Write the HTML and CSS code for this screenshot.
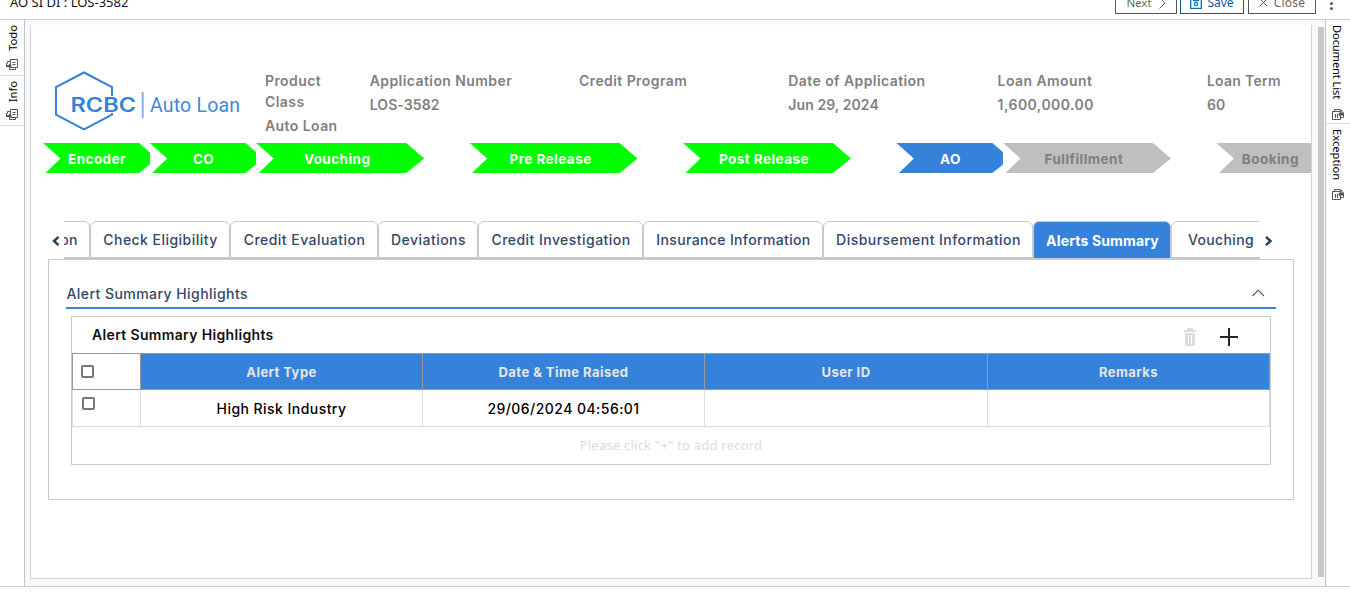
FILE: index.html
```html
<!DOCTYPE html>
<html lang="en">
<head>
<meta charset="utf-8">
<title>AO SI DI : LOS-3582</title>
<link rel="stylesheet" href="styles.css">
</head>
<body>
<svg class="defs" aria-hidden="true">
  <symbol id="doc-icon" viewBox="0 0 12 11">
    <path d="M4.500 2.500v-2h7v8h-2M4.500 2.500H1.500v2M3.500 9v1.500h6v-2M6.500 3.500h3M6.500 5.500h3M4.500 2.500v6h5" fill="none" stroke="#555" stroke-width="1"/>
    <path d="M0 4h1v2h2V4.500L6 7 3 9.500V8H0z" fill="#555"/>
  </symbol>
  <symbol id="list-icon" viewBox="0 0 12 11">
    <path d="M.5 2.500h8v8h-8zM2.500 2.500v-2h6v2M8.500 1.500h1.500v2M8.500 8.500h3v-3M3.500 5v4M5.500 5v4" fill="none" stroke="#555" stroke-width="1"/>
    <path d="M12 3.500v3H9V8L6 5.200 9 2.500v1z" fill="#555"/>
  </symbol>
</svg>
<div class="app">
  <header class="topbar">
    <h1 class="page-title">AO SI DI : LOS-3582</h1>
    <div class="actions">
      <button class="btn btn-next"><span>Next</span><svg width="8" height="12" viewBox="0 0 8 12"><path d="M1.500.5l5.500 5.500-5.500 5.500" fill="none" stroke="#666"/></svg></button>
      <button class="btn btn-save"><svg width="12" height="12" viewBox="0 0 12 12"><path d="M.7.7h10.600v10.600H.7zM3 3.500h6" fill="none" stroke="#0a6ebd" stroke-width="1.300"/><circle cx="6" cy="7" r="1.600" fill="none" stroke="#0a6ebd" stroke-width="1.200"/></svg><span>Save</span></button>
      <button class="btn btn-close"><svg width="9" height="9" viewBox="0 0 9 9"><path d="M.5.5l8 8M8.500.5l-8 8" fill="none" stroke="#555"/></svg><span>Close</span></button>
      <span class="kebab"><i></i><i></i><i></i></span>
    </div>
  </header>
  <div class="body">
    <nav class="rail rail-left">
      <div class="rail-tab todo"><span>Todo</span><svg width="12" height="11"><use href="#doc-icon"/></svg></div>
      <div class="rail-tab info"><span>Info</span><svg width="12" height="11"><use href="#doc-icon"/></svg></div>
    </nav>
    <main class="content">
      <div class="card">
        <section class="summary">
          <svg class="logo" width="190" height="62" viewBox="0 0 190 62">
            <path d="M58 26V17.200L30 2.500 2 17.200v27.500L30 59.300l28-14.600V43" fill="none" stroke="#3682da" stroke-width="2"/>
            <text class="logo-name" x="16.500" y="41.500" textLength="65.500" lengthAdjust="spacingAndGlyphs">RCBC</text>
            <path d="M88.700 22v26" stroke="#86b3ea" stroke-width="2"/>
            <text class="logo-sub" x="96" y="41.500" textLength="90" lengthAdjust="spacing">Auto Loan</text>
          </svg>
          <dl class="fields">
            <div class="field narrow"><dt>Product Class</dt><dd>Auto Loan</dd></div>
            <div class="field"><dt>Application Number</dt><dd class="tight">LOS-3582</dd></div>
            <div class="field"><dt>Credit Program</dt><dd></dd></div>
            <div class="field"><dt>Date of Application</dt><dd class="tight">Jun 29, 2024</dd></div>
            <div class="field"><dt>Loan Amount</dt><dd class="loose">1,600,000.00</dd></div>
            <div class="field last"><dt>Loan Term</dt><dd>60</dd></div>
          </dl>
        </section>
        <div class="steps">
          <div class="slot"><div class="step done">Encoder</div></div>
          <div class="slot"><div class="step done">CO</div></div>
          <div class="slot wide"><div class="step done">Vouching</div></div>
          <div class="slot wide"><div class="step done">Pre Release</div></div>
          <div class="slot wide"><div class="step done">Post Release</div></div>
          <div class="slot"><div class="step current">AO</div></div>
          <div class="slot wide"><div class="step">Fullfillment</div></div>
          <div class="slot"><div class="step">Booking</div></div>
        </div>
        <div class="tabbar">
          <svg class="arrow" width="16" height="12" viewBox="0 0 16 12"><path d="M10.500 1.800L6 6l4.500 4.200" fill="none" stroke="#27415f" stroke-width="2.500"/></svg>
          <div class="tabs">
            <div class="tab t-first"><span>on</span></div>
            <div class="tab t-elig">Check Eligibility</div>
            <div class="tab t-eval">Credit Evaluation</div>
            <div class="tab t-dev">Deviations</div>
            <div class="tab t-inv">Credit Investigation</div>
            <div class="tab t-ins">Insurance Information</div>
            <div class="tab t-disb">Disbursement Information</div>
            <div class="tab t-alerts active">Alerts Summary</div>
            <div class="tab t-vouch">Vouching</div>
          </div>
          <svg class="arrow" width="16" height="12" viewBox="0 0 16 12"><path d="M6 1.800L10.500 6 6 10.200" fill="none" stroke="#27415f" stroke-width="2.500"/></svg>
        </div>
        <section class="panel">
          <div class="section-head"><h2>Alert Summary Highlights</h2><svg width="14" height="8" viewBox="0 0 14 8"><path d="M1.500 7L7.200 1.200 13 7" fill="none" stroke="#42546f" stroke-width="1.100"/></svg></div>
          <div class="grid-box">
            <div class="grid-head">
              <h3>Alert Summary Highlights</h3>
              <svg class="trash" width="12" height="18" viewBox="0 0 12 18"><path d="M3 0h6v2h3v2H0V2h3zM1 5h10v13H1z" fill="#ddd"/><path d="M4.500 7v9M7.500 7v9" stroke="#fff"/></svg>
              <svg width="18" height="18" viewBox="0 0 18 18"><path d="M0 9h18M9 0v18" stroke="#262626" stroke-width="2"/></svg>
            </div>
            <table class="grid">
              <colgroup><col class="c-check"><col class="c-data"><col class="c-data"><col class="c-user"><col class="c-data"></colgroup>
              <thead><tr><th><i class="check"></i></th><th>Alert Type</th><th>Date &amp; Time Raised</th><th>User ID</th><th>Remarks</th></tr></thead>
              <tbody><tr><td><i class="check"></i></td><td>High Risk Industry</td><td>29/06/2024 04:56:01</td><td></td><td></td></tr></tbody>
            </table>
            <p class="hint">Please click "+" to add record</p>
          </div>
        </section>
      </div>
      <div class="scrollbar"></div>
    </main>
    <nav class="rail rail-right">
      <div class="rail-tab doclist"><span>Document List</span><svg width="12" height="11"><use href="#list-icon"/></svg></div>
      <div class="rail-tab exception"><span>Exception</span><svg width="12" height="11"><use href="#list-icon"/></svg></div>
    </nav>
  </div>
</div>
</body>
</html>
```
FILE: styles.css
```css
* { box-sizing: border-box; }
body, h1, h2, h3, p, dl, dd { margin: 0; }
body { background: #fff; font-family: Inter, "Liberation Sans", sans-serif; overflow: hidden; }
svg { display: block; flex: none; }
.defs { display: none; }
.app { width: 1350px; height: 602px; overflow: hidden; }

.topbar { height: 20px; border-bottom: 1px solid #ccc; display: flex; justify-content: space-between; align-items: flex-end; padding-left: 10px; }
.page-title { font: 400 13px/18px "Noto Sans", sans-serif; color: #111; margin-bottom: 8px; }
.actions { display: flex; gap: 3px; padding-bottom: 5px; align-items: flex-end; }
.btn { height: 24px; border: 1px solid #555; background: #fff; display: flex; align-items: center; justify-content: center; padding: 1px 0 0; font: 400 12px "Noto Sans", sans-serif; color: #666; }
.btn-next { width: 62px; gap: 6px; font-size: 11.500px; }
.btn-save { width: 64px; gap: 5px; border-color: #0a5a9c; color: #0a5a9c; }
.btn-close { width: 68px; gap: 6px; margin-left: 1px; letter-spacing: .2px; }
.kebab { width: 37px; height: 20px; margin-left: -6px; display: flex; flex-direction: column; align-items: center; justify-content: center; gap: 2px; padding-bottom: 1px; }
.kebab i { width: 3px; height: 3px; border-radius: 50%; background: #555; }

.body { height: 567px; display: flex; border-bottom: 1px solid #ccc; }
.rail { width: 25px; background: #fff; }
.rail-left { border-right: 1px solid #c2c2c2; }
.rail-right { border-left: 1px solid #c2c2c2; }
.rail-tab { display: flex; flex-direction: column; align-items: center; justify-content: space-between; border-bottom: 1px solid #ddd; padding: 5px 0; }
.rail-tab span { writing-mode: vertical-rl; font: 11.200px/16px "Noto Sans", sans-serif; color: #000; }
.rail-left span { transform: rotate(180deg); margin-left: 2px; }
.rail-right span { margin-right: 2px; }
.todo { height: 56px; padding-top: 5px; padding-bottom: 5px; }
.info { height: 50px; padding-bottom: 5px; }
.doclist { height: 104px; padding-bottom: 3px; }
.doclist span { letter-spacing: -.15px; }
.exception { height: 81px; border-bottom: 0; }

.content { width: 1300px; background: #f7f9fb; display: flex; padding: 5px 1px 7px 5px; justify-content: space-between; }
.card { width: 1282px; background: #fff; border: 1px solid #d4d4d6; border-top: 0; overflow: hidden; }
.scrollbar { width: 6px; background: #c8c8c8; margin: 2px 0 2px; }

.summary { height: 118px; display: flex; padding: 45px 0 0 23px; }
.logo-name { font: 600 19.500px Inter, sans-serif; fill: #3682da; }
.logo-sub { font: 400 19.500px Roboto, sans-serif; fill: #4187dc; }
.fields { display: flex; margin-left: 21px; color: #7f7f7f; font-size: 14px; font-weight: 600; line-height: 21px; letter-spacing: .42px; }
.field { width: 209.300px; flex: none; }
.field.narrow { width: 104.700px; padding-right: 30px; }
.field.last { width: 75px; white-space: nowrap; letter-spacing: .28px; }
.field dd { margin-top: 3px; }
.field .tight { letter-spacing: .08px; }
.field .loose { letter-spacing: .45px; }

.steps { display: flex; height: 30px; padding-left: 12px; }
.slot { width: 106.600px; flex: none; overflow: hidden; }
.slot.wide { width: 213.400px; }
.step { height: 30px; width: 114px; padding-right: 6px; display: flex; align-items: center; justify-content: center; padding-top: 2px; font-size: 13.500px; font-weight: 700; letter-spacing: .45px; background: #bfbfbf; color: #7f7f7f; clip-path: polygon(0 0, calc(100% - 18px) 0, 100% 15.500px, calc(100% - 18px) 30px, 2.500px 30px, 17.500px 15.500px); }
.wide .step { width: 168px; }
.step.done { background: #0f0; color: #fff; }
.step.current { background: #3682da; color: #fff; }

.tabbar { display: flex; margin-top: 48px; padding-left: 17px; }
.arrow { margin-top: 14px; }
.tabs { width: 1196px; height: 38px; display: flex; overflow: hidden; border-bottom: 1px solid #c9c9c9; }
.tab { flex: none; border: 1px solid #c9c9c9; border-radius: 6px 6px 0 0; display: flex; align-items: center; justify-content: center; white-space: nowrap; color: #33476a; font-size: 14px; font-weight: 500; letter-spacing: .46px; padding-left: 1px; }
.t-first { width: 26px; border-left: 0; border-top-left-radius: 0; justify-content: flex-end; padding-right: 11px; overflow: hidden; }
.t-elig { width: 140px; }
.t-eval { width: 148px; }
.t-dev { width: 100px; }
.t-inv { width: 165px; }
.t-ins { width: 180px; letter-spacing: .36px; }
.t-disb { width: 210px; }
.t-alerts { width: 138px; letter-spacing: .15px; }
.t-vouch { width: 130px; justify-content: flex-start; padding-left: 16px; letter-spacing: .35px; }
.tab.active { height: 38px; background: #3682da; color: #fff; font-weight: 700; border-bottom: 0; padding-bottom: 1px; }

.panel { width: 1246px; height: 241px; margin-left: 17px; border: 1px solid #c9c9c9; padding: 23px 17px 0; }
.section-head { width: 1210px; height: 26px; border-bottom: 2px solid #3682da; display: flex; justify-content: space-between; align-items: flex-start; padding-right: 11px; }
.section-head h2 { font-size: 14px; font-weight: 500; line-height: 22px; letter-spacing: .44px; color: #33476a; padding-left: .5px; }
.section-head svg { margin-top: 6px; }
.grid-box { width: 1200px; height: 149px; margin: 7px 0 0 5px; border: 1px solid #c9c9c9; }
.grid-head { height: 36px; display: flex; align-items: center; padding: 4px 32px 0 20px; }
.grid-head h3 { flex: 1; font-size: 14px; font-weight: 600; letter-spacing: .34px; color: #111; padding-bottom: 5px; }
.trash { margin-right: 24px; }
.grid { width: 1198px; border-collapse: collapse; table-layout: fixed; letter-spacing: .45px; text-align: center; }
.c-check { width: 68px; }
.c-data { width: 282px; }
.c-user { width: 283px; }
.grid th { height: 36px; padding: 0; border: 1px solid #999; background: #3682da; color: #e6e6e6; font-size: 13px; font-weight: 700; }
.grid td { height: 37px; padding: 0; border: 1px solid #ddd; border-top-color: #999; color: #000; font-size: 14px; font-weight: 500; }
.grid th:first-child { background: #fff; text-align: left; padding: 0 0 1px 8px; }
.grid td:first-child { text-align: left; padding: 0 0 10px 9px; }
.check { display: block; width: 13px; height: 13px; border: 2px solid #767676; border-radius: 2px; background: #fff; }
.hint { font: 13px/18px "Noto Sans", sans-serif; letter-spacing: .22px; color: #dcdcdc; text-align: center; padding-top: 9px; }
```
